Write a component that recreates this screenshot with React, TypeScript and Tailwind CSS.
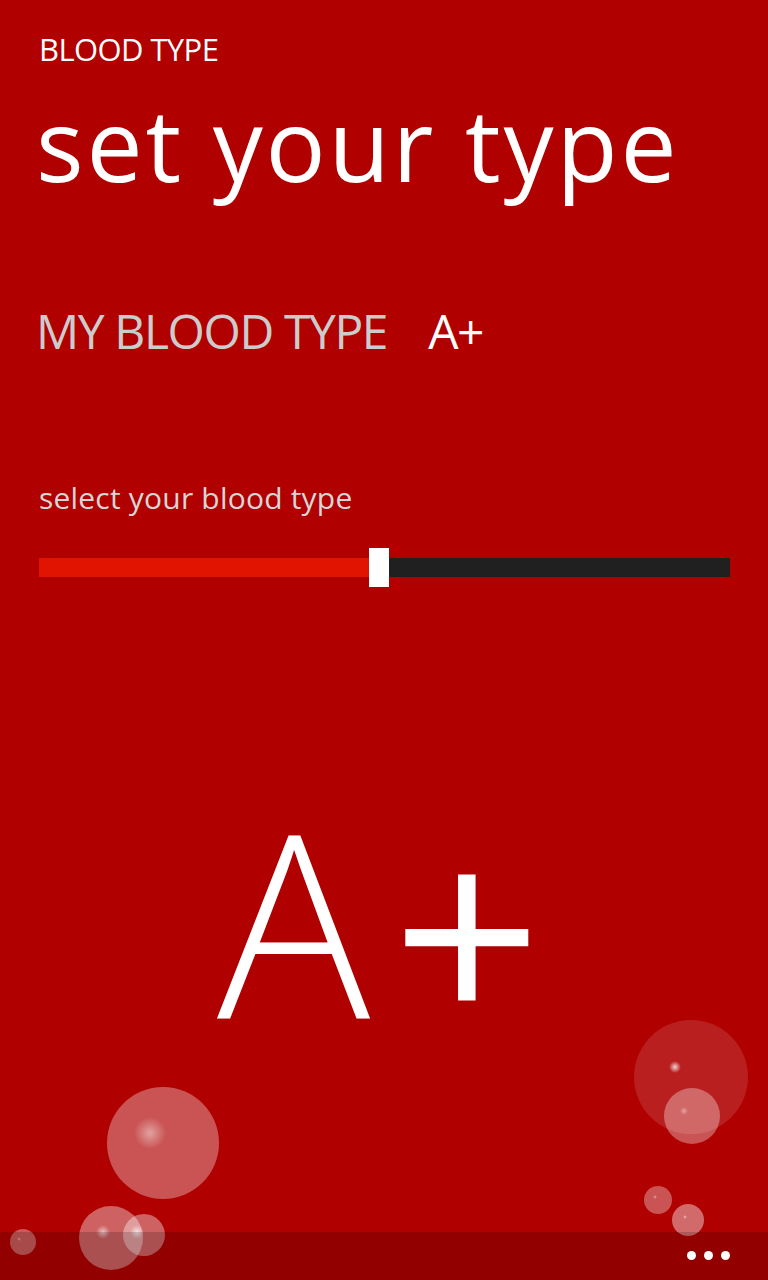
import React from "react";

type Bubble = { cx: number; cy: number; r: number; a: number; hx: number; hy: number; hr: number; ho: number };

const bubbles: Bubble[] = [
  { cx: 163, cy: 1143, r: 56, a: 0.33, hx: 150, hy: 1133, hr: 16, ho: 0.45 },
  { cx: 691, cy: 1077, r: 57, a: 0.12, hx: 675, hy: 1067, hr: 6, ho: 0.8 },
  { cx: 692, cy: 1116, r: 28, a: 0.33, hx: 684, hy: 1111, hr: 4, ho: 0.4 },
  { cx: 658, cy: 1200, r: 14, a: 0.33, hx: 655, hy: 1197, hr: 2, ho: 0.5 },
  { cx: 688, cy: 1220, r: 16, a: 0.42, hx: 685, hy: 1217, hr: 2, ho: 0.6 },
  { cx: 111, cy: 1238, r: 32, a: 0.38, hx: 103, hy: 1232, hr: 7, ho: 0.6 },
  { cx: 144, cy: 1235, r: 21, a: 0.38, hx: 137, hy: 1232, hr: 7, ho: 0.7 },
  { cx: 23, cy: 1242, r: 13, a: 0.35, hx: 19, hy: 1239, hr: 2, ho: 0.5 },
];

function Bubbles(): React.JSX.Element {
  return (
    <svg
      className="pointer-events-none absolute left-0 top-0"
      width={768}
      height={1280}
      viewBox="0 0 768 1280"
    >
      <defs>
        <radialGradient id="hl">
          <stop offset="0%" stopColor="#fff" stopOpacity="1" />
          <stop offset="100%" stopColor="#fff" stopOpacity="0" />
        </radialGradient>
      </defs>
      {bubbles.map((b, i) => (
        <g key={i}>
          <circle cx={b.cx} cy={b.cy} r={b.r} fill="#fff" fillOpacity={b.a} />
          <circle cx={b.hx} cy={b.hy} r={b.hr} fill="url(#hl)" opacity={b.ho} />
        </g>
      ))}
    </svg>
  );
}

export default function App(): React.JSX.Element {
  return (
    <div
      className="relative flex h-[1280px] w-[768px] flex-col overflow-hidden bg-[#b00000] text-white"
      style={{ fontFamily: '"Open Sans", "Noto Sans", sans-serif' }}
    >
      <div className="flex flex-col pl-[39px]">
        <div className="pt-[34px] text-[31px] leading-none tracking-[-0.6px]">BLOOD TYPE</div>
        <div className="-ml-[3px] mt-[28px] text-[100px] font-normal leading-none tracking-[2.8px]">
          set your type
        </div>
        <div className="-ml-[3px] mt-[114px] flex items-baseline gap-[41px] text-[48px] leading-none tracking-[-1.4px]">
          <span className="text-[#cccccc]">MY BLOOD TYPE</span>
          <span className="text-white">A+</span>
        </div>
        <div className="mt-[128px] text-[30px] leading-none tracking-[0.2px] text-[#d6d6d6]">
          select your blood type
        </div>
        <div className="mt-[35px] flex h-[39px] w-[691px] items-center">
          <div className="h-[19px] w-[330px] bg-[#e01400]" />
          <div className="h-[39px] w-[20px] bg-white" />
          <div className="h-[19px] flex-1 bg-[#202020]" />
        </div>
      </div>

      <div className="mt-[205px] flex items-start justify-start pl-[217px] text-[255px] font-light leading-none">
        <span>A</span>
        <span className="ml-[22px] pt-[6px] text-[262px] font-normal">+</span>
      </div>

      <Bubbles />

      <div className="absolute bottom-0 left-0 flex h-[48px] w-full items-start justify-end gap-[8px] bg-black/[0.17] pr-[38px] pt-[19px]">
        <span className="h-[9px] w-[9px] rounded-full bg-white" />
        <span className="h-[9px] w-[9px] rounded-full bg-white" />
        <span className="h-[9px] w-[9px] rounded-full bg-white" />
      </div>
    </div>
  );
}
